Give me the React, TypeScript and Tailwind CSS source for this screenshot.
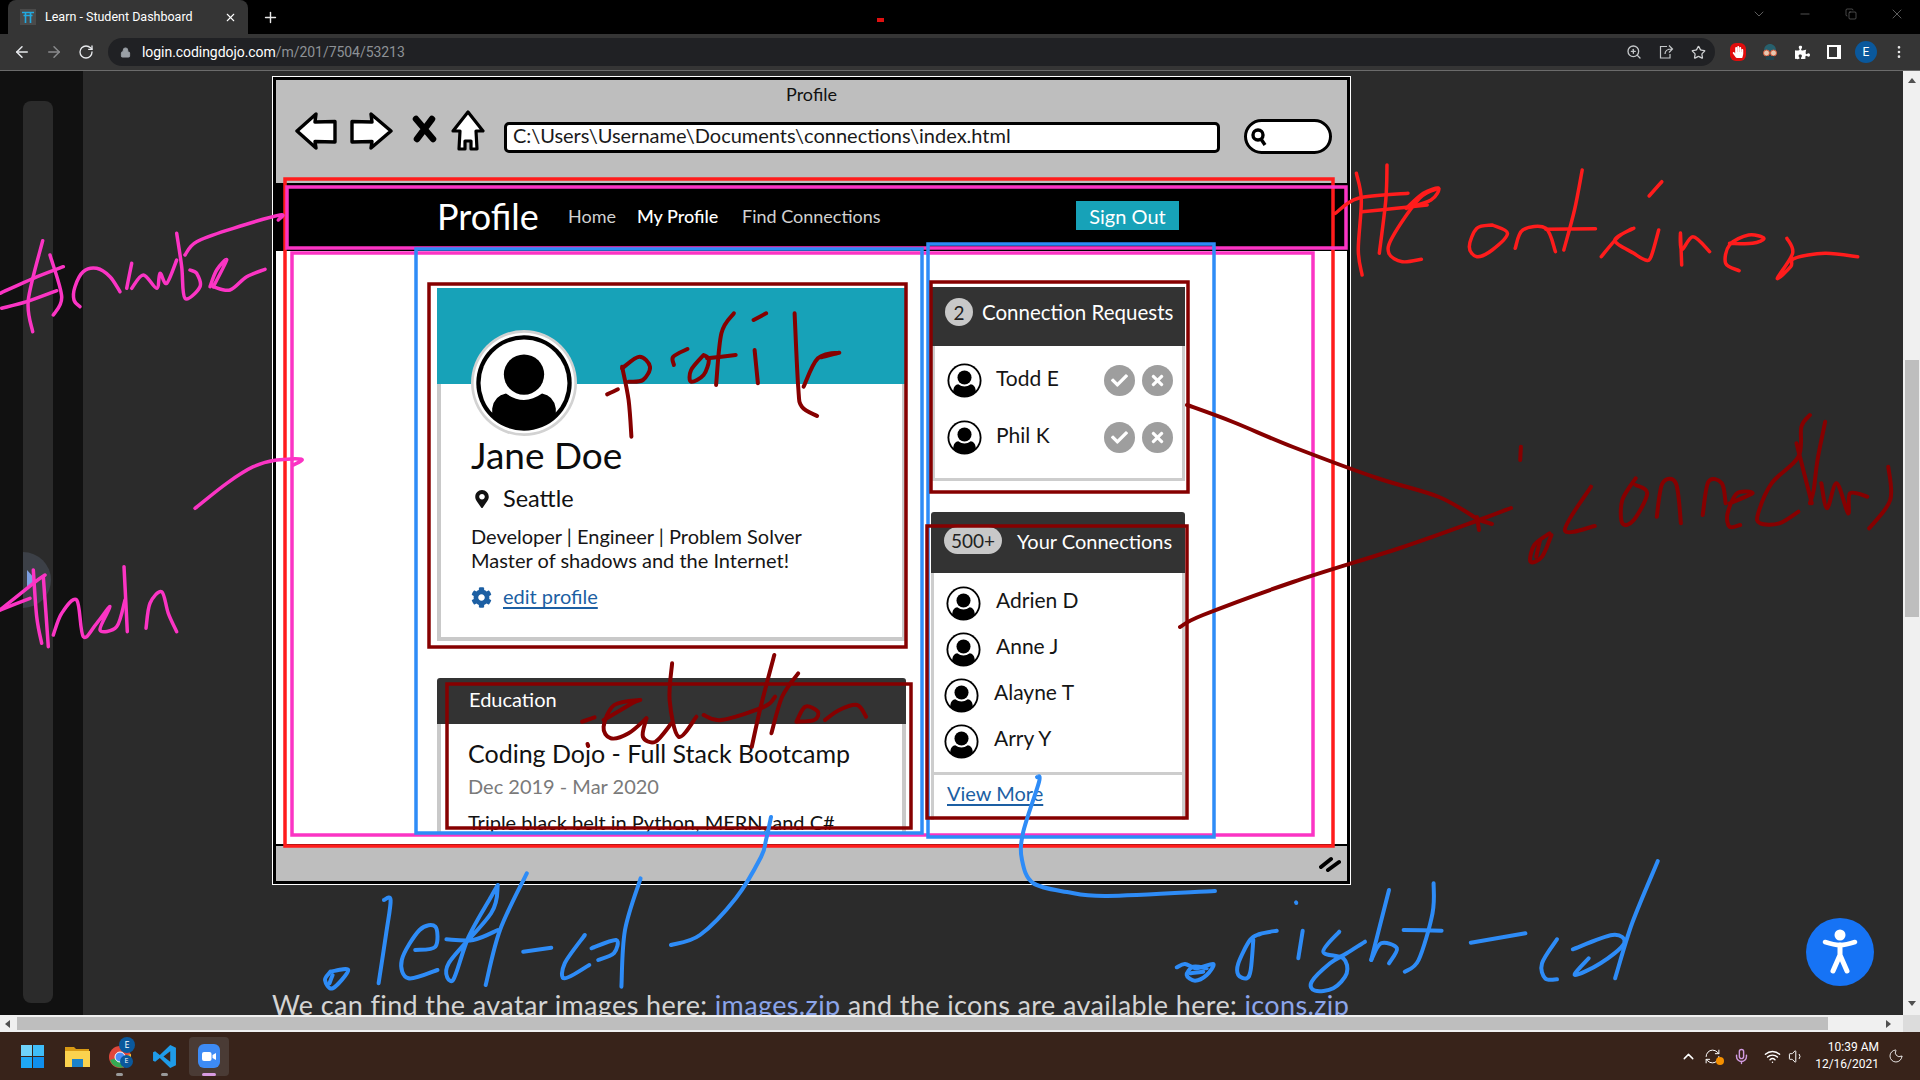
import React from "react";
import {
  ArrowLeft, ArrowRight, RotateCw, Lock, ZoomIn, Star, EllipsisVertical, Minus, X, Plus, ChevronDown, Copy,
  ChevronUp, Mic, Wifi, Volume1, Moon, RefreshCw,
} from "lucide-react";
import { FaCheck, FaTimes, FaCog, FaMapMarkerAlt, FaPuzzlePiece, FaHandPaper } from "react-icons/fa";

type Stroke = number[];
type Ink = { x: number; y: number; sx: number; sy: number; color: string; w: number; strokes: Stroke[] };

function toPath(s: Stroke, o: Ink) {
  const p: [number, number][] = [];
  for (let i = 0; i < s.length; i += 2) p.push([o.x + s[i] / o.sx, o.y + s[i + 1] / o.sy]);
  let d = `M${p[0][0].toFixed(1)} ${p[0][1].toFixed(1)}`;
  for (let i = 0; i < p.length - 1; i++) {
    const a = p[Math.max(i - 1, 0)], b = p[i], c = p[i + 1], e = p[Math.min(i + 2, p.length - 1)];
    d += `C${(b[0] + (c[0] - a[0]) / 6).toFixed(1)} ${(b[1] + (c[1] - a[1]) / 6).toFixed(1)} ${(c[0] - (e[0] - b[0]) / 6).toFixed(1)} ${(c[1] - (e[1] - b[1]) / 6).toFixed(1)} ${c[0].toFixed(1)} ${c[1].toFixed(1)}`;
  }
  return d;
}

const PINK = "#fb34c4", RED = "#ff1c1c", BLUE = "#2e8cf7", DARK = "#860000";

const inks: Ink[] = [
  { x: 0, y: 200, sx: 3, sy: 3, color: PINK, w: 3.5, strokes: [
    [0,280,100,235,190,200],[5,325,80,305,170,272],[128,122,85,300,98,395],[150,165,185,290,160,345],
    [240,320,222,300,225,260,250,215,290,205,330,230,360,275],[380,265,395,190],[395,265,430,225,470,265,480,220,500,250,530,180],
    [530,100,545,200,555,295,600,260,590,220,570,210],[555,165,590,125,700,85,840,45,835,60],
    [630,260,650,210,680,180,640,260],[640,260,690,270,740,230,795,208],
    [585,925,680,850,760,800,830,780,905,778,880,795],
    [0,1230,100,1150,135,1125],[0,1230,90,1195],[100,1110,110,1250,125,1330],[130,1130,145,1340],
    [160,1305,185,1240,230,1200,250,1310,290,1270,330,1220,300,1290,350,1280,375,1200],[372,1100,382,1295],
    [438,1285,450,1210,485,1175,505,1240,530,1295],
  ]},
  { x: 1320, y: 150, sx: 2.613, sy: 3, color: RED, w: 3.5, strokes: [
    [95,70,108,150,100,300,110,375],[175,45,172,150,155,310],[40,190,100,145,230,130],[110,185,200,175,280,165],
    [310,115,260,145,190,260,180,310,215,335,265,328],[225,175,270,130,310,115,290,150,225,175],
    [450,225,410,235,390,290,410,320,450,300,490,250,450,225],[510,295,530,240,590,235,615,305],
    [685,60,665,180,637,300],[590,238,720,236],[735,320,780,260,820,235,770,270,820,310,850,330,865,320,885,240],
    [860,138,893,95],[945,345,942,250,945,300,975,260,1018,305],
    [1070,280,1130,280,1160,265,1120,255,1070,285,1060,340,1095,362],[1220,265,1235,310,1195,385,1230,350,1240,325,1320,310,1405,320],
  ]},
  { x: 0, y: 0, sx: 1, sy: 1, color: DARK, w: 4, strokes: [
    [1187,405,1233,422,1293,447,1377,478,1439,497,1479,520],
    [1180,627,1203,615,1293,582,1400,548,1479,520,1511,508],
    [1479,520,1492,524],[1477,517,1479,530],
  ]},
  { x: 1320, y: 150, sx: 2.613, sy: 3, color: DARK, w: 4, strokes: [
    [525,890,523,930],[708,1010,640,1140,718,1128],[600,1150,560,1185,550,1235,580,1220,605,1155],[575,1170,565,1220],
    [825,985,790,1050,790,1120,820,1110,855,1030,825,1005],[880,1100,895,1000,930,1000,943,1120],
    [1000,1095,1015,995,1050,1000,1060,1060],[1070,1060,1130,1030,1090,1030,1065,1090,1070,1130,1098,1125],
    [1250,1085,1200,1120,1150,1120,1145,1090,1180,1000,1250,920,1258,830,1280,795],[1245,880,1285,1060],[1320,815,1300,930,1290,1020,1280,1060],
    [1310,1000,1325,1075,1350,1000,1380,1090,1385,1030,1430,1040],[1485,950,1490,1050,1435,1135],
  ]},
  { x: 400, y: 300, sx: 2.8, sy: 3, color: DARK, w: 4, strokes: [
    [580,283,610,268],[622,200,640,300,648,410],[622,205,670,170,700,200,680,240,640,245],[767,195,765,170,805,147],
    [850,165,815,210,815,245,850,225,865,180,850,165],[935,40,900,100,885,255],[860,175,940,165],[990,60,1025,40],
    [993,150,1002,250],[1105,40,1115,260,1125,320,1168,348],[1130,260,1170,175,1230,158,1180,172],
  ]},
  { x: 400, y: 640, sx: 2.8, sy: 3, color: DARK, w: 4, strokes: [
    [510,245,545,232],[525,312,527,318],[570,240,650,190,670,180,600,195,570,260,590,295,640,280,690,235],
    [690,235,680,290,715,305,760,250],[762,70,755,180,780,290,830,230],[850,225,900,240,1020,200,1050,170],
    [1048,45,1010,200,985,320],[1115,100,1070,170,1040,280],[1110,245,1135,200,1170,215,1160,240,1110,245],
    [1190,240,1230,210,1280,195,1305,230],
  ]},
  { x: 0, y: 880, sx: 2.24, sy: 3, color: BLUE, w: 4, strokes: [
    [740,275,780,270,745,325,728,300,740,275],[745,285,738,310],[860,60,875,60,865,160,848,310],
    [930,210,975,200,975,140,940,150,900,240,915,295,980,270],
    [1115,15,1100,50,1050,170,1015,300,1005,250,1100,100,1115,15],[1180,-20,1120,150,1088,315],[1000,178,1060,180,1115,150],
    [1172,215,1235,203],[1310,165,1265,250,1265,295,1320,255],[1340,240,1375,220,1380,180,1325,205],[1435,-5,1400,150,1392,320],
  ]},
  { x: 0, y: 0, sx: 1, sy: 1, color: BLUE, w: 4, strokes: [
    [771,817,766,840,761,857,736,898,700,935,671,945],
    [1037,777,1039,782,1023,833,1022,860,1033,883,1067,892,1107,896,1215,891],
  ]},
  { x: 1160, y: 860, sx: 3, sy: 3, color: BLUE, w: 4, strokes: [
    [50,322,75,312,110,325,160,312,140,345,105,362,80,345,100,320,140,325],[90,340,130,335],
    [350,212,300,222,270,240,235,310,235,345,260,355,272,330,280,240],
    [408,127,409,129],[428,212,415,295],
    [538,215,490,275,550,295,560,340,520,385,465,392,455,365,510,310,560,280,615,245],
  ]},
  { x: 1300, y: 880, sx: 2.529, sy: 3, color: BLUE, w: 4, strokes: [
    [225,30,180,240],[180,240,205,190,245,205,225,250],[338,10,335,100,300,240,265,275],[262,150,358,152],
    [432,188,570,160],[650,178,612,250,620,295,650,298],[690,208,790,165,820,190,760,250,695,285,730,235],
    [905,-57,840,130,797,295],
  ]},
];

const boxes: [number, number, number, number, string][] = [
  [285, 179, 1333, 846, RED],
  [287, 187, 1346, 248, PINK],
  [292, 253, 1313, 835, PINK],
  [416, 249, 922, 833, BLUE],
  [928, 244, 1214, 837, BLUE],
  [429, 284, 906, 647, DARK],
  [931, 282, 1188, 492, DARK],
  [927, 526, 1187, 818, DARK],
  [447, 684, 911, 828, DARK],
];

function Annotations() {
  return (
    <svg className="absolute inset-0 pointer-events-none" width={1920} height={1080} viewBox="0 0 1920 1080" fill="none">
      {boxes.map(([a, b, c, d, col], i) => (
        <rect key={i} x={a} y={b} width={c - a} height={d - b} stroke={col} strokeWidth={3.5} />
      ))}
      {inks.map((ink, i) => (
        <g key={i} stroke={ink.color} strokeWidth={ink.w} strokeLinecap="round" strokeLinejoin="round">
          {ink.strokes.map((s, j) => <path key={j} d={toPath(s, ink)} />)}
        </g>
      ))}
    </svg>
  );
}

function Avatar({ size, ring = false }: { size: number; ring?: boolean }) {
  return (
    <svg width={size} height={size} viewBox="0 0 100 100" className="shrink-0">
      <defs>
        <clipPath id={ring ? "av1" : "av2"}><circle cx="50" cy="50" r="43" /></clipPath>
      </defs>
      <circle cx="50" cy="50" r="50" fill={ring ? "#d2d2d2" : "#fff"} />
      <circle cx="50" cy="50" r={ring ? 47.5 : 49} fill="#fff" />
      <circle cx="50" cy="50" r={ring ? 45 : 46} fill="#000" />
      <circle cx="50" cy="50" r="41" fill="#fff" />
      <g clipPath={`url(#${ring ? "av1" : "av2"})`}>
        <circle cx="50" cy="42" r="19" fill="#000" />
        <path d="M20 100 L20 74 Q22 62 33 60 Q50 72 67 60 Q78 62 80 74 L80 100 Z" fill="#000" />
        <path d="M8 100 H92 V78 H8Z" fill="#000" />
      </g>
    </svg>
  );
}

function Mini({ n, c }: { n: string; c: string }) {
  return (
    <div className={`flex items-center gap-[14px] ${c}`}>
      <Avatar size={37} />
      <span className="text-[21px] leading-none text-[#151515] -mt-[8px]">{n}</span>
    </div>
  );
}

function RoundBtn({ kind }: { kind: "ok" | "no" }) {
  return (
    <span className="w-[31px] h-[31px] rounded-full bg-[#9e9e9e] flex items-center justify-center">
      {kind === "ok" ? <FaCheck size={17} color="#fff" /> : <FaTimes size={17} color="#fff" />}
    </span>
  );
}

function ChromeBars() {
  return (
    <>
      <div className="h-[34px] bg-black flex items-end pl-[8px] relative shrink-0 font-['Roboto',sans-serif]">
        <div className="w-[240px] h-[34px] bg-[#353535] rounded-t-[8px] flex items-center pl-[12px] pr-[11px] text-white">
          <span className="w-[16px] h-[16px] bg-[#4a4a4a] flex items-center justify-center">
            <svg width="12" height="12" viewBox="0 0 12 12" stroke="#22a9e0" strokeWidth="1.6" fill="none"><path d="M0 1.5H12M1.5 4.5H10.5M3.5 1.5V12M8.5 1.5V12" /></svg>
          </span>
          <span className="ml-[9px] text-[12.5px] flex-1 whitespace-nowrap">Learn - Student Dashboard</span>
          <X size={13} color="#fff" />
        </div>
        <span className="ml-[14px] self-center"><Plus size={17} color="#e8e8e8" /></span>
        <span className="absolute left-[877px] top-[18px] w-[7px] h-[4px] bg-[#e01010]" />
        <div className="absolute top-0 right-0 h-[28px] flex items-center text-[#8c8c8c]">
          <span className="w-[46px] flex justify-center"><ChevronDown size={16} strokeWidth={1} /></span>
          <span className="w-[46px] flex justify-center"><Minus size={14} strokeWidth={1} /></span>
          <span className="w-[46px] flex justify-center"><Copy size={12} strokeWidth={1} /></span>
          <span className="w-[46px] flex justify-center"><X size={16} strokeWidth={1} /></span>
        </div>
      </div>
      <div className="h-[37px] bg-[#353535] border-b border-[#6b6b6b] flex items-center shrink-0 font-['Roboto',sans-serif]">
        <span className="w-[32px] ml-[6px] flex justify-center"><ArrowLeft size={18} color="#e8eaed" /></span>
        <span className="w-[32px] flex justify-center"><ArrowRight size={18} color="#8a8b8d" /></span>
        <span className="w-[32px] flex justify-center"><RotateCw size={16} color="#e8eaed" /></span>
        <div className="ml-[6px] w-[1607px] h-[28px] rounded-full bg-[#202124] flex items-center pl-[12px]">
          <Lock size={11} color="#9aa0a6" fill="#9aa0a6" />
          <span className="ml-[11px] text-[14px] text-white tracking-[-0.05px]">login.codingdojo.com<span className="text-[#8d9196]">/m/201/7504/53213</span></span>
          <span className="flex-1" />
          <span className="w-[32px] flex justify-center"><ZoomIn size={16} color="#c4c7c9" /></span>
          <span className="w-[32px] flex justify-center">
            <svg width="16" height="16" viewBox="0 0 16 16" fill="none" stroke="#c4c7c9" strokeWidth="1.2"><path d="M9 2.5H2.5V14H12V10M7 10C7 6.5 9.5 5 14 5M11 1.5L14.5 5L11 8.5" /></svg>
          </span>
          <span className="w-[32px] mr-[1px] flex justify-center"><Star size={15} color="#d0d2d4" strokeWidth={2} /></span>
        </div>
        <div className="w-[32px] ml-[7px] flex justify-center">
          <span className="w-[16px] h-[18px] rounded-[6px] bg-[#e00d0d] flex items-center justify-center"><FaHandPaper size={12} color="#fff" /></span>
        </div>
        <span className="w-[32px] flex justify-center">
          <svg width="18" height="18" viewBox="0 0 18 18"><path d="M3 8C3 3 6 1 9 1S15 3 15 8Z" fill="#27606d" /><circle cx="5.5" cy="10" r="3" fill="#e7c8b0" stroke="#d55b3d" /><circle cx="12.5" cy="10" r="3" fill="#e7c8b0" stroke="#d55b3d" /><path d="M5 13H13V17H5Z" fill="#22434e" /></svg>
        </span>
        <span className="w-[32px] flex justify-center"><FaPuzzlePiece size={15} color="#fff" /></span>
        <span className="w-[32px] flex justify-center">
          <span className="w-[14px] h-[14px] bg-white flex justify-start"><span className="w-[8px] h-[10px] mt-[2px] ml-[2px] bg-[#353535]" /></span>
        </span>
        <span className="w-[32px] flex justify-center">
          <span className="w-[22px] h-[22px] rounded-full bg-[#0a589c] text-white text-[12px] flex items-center justify-center">E</span>
        </span>
        <span className="w-[34px] flex justify-center"><EllipsisVertical size={16} color="#e8e8e8" /></span>
      </div>
    </>
  );
}

function Sidebar() {
  return (
    <div className="w-[83px] bg-[#111111] shrink-0 pl-[23px] pt-[30px] relative">
      <div className="w-[30px] h-[902px] bg-[#2b2b2b] rounded-[8px]" />
      <div className="absolute left-[23px] top-[481px] w-[28px] h-[56px] rounded-r-full bg-[#3c4047] flex items-center pl-[4px]">
        <span className="w-0 h-0 border-y-[10px] border-y-transparent border-l-[9px] border-l-[#7d9fe3]" />
      </div>
    </div>
  );
}

function MockBar() {
  return (
    <div className="h-[103px] bg-[#bebebe] flex flex-col shrink-0">
      <div className="h-[30px] pt-[3px] text-center text-[18px] leading-[22px] text-[#111]">Profile</div>
      <div className="flex items-start pl-[19px] h-[73px]">
        <svg width="42" height="38" viewBox="0 0 42 38" className="mt-[2px]" fill="#fff" stroke="#000" strokeWidth="3.4" strokeLinejoin="round">
          <path d="M2 19 L21 2 L20 10 L40 9.5 L40 30 L20 29.5 L21 36 Z" />
        </svg>
        <svg width="43" height="38" viewBox="0 0 43 38" className="ml-[13px] mt-[2px]" fill="#fff" stroke="#000" strokeWidth="3.4" strokeLinejoin="round">
          <path d="M41 19 L21 2 L22 10 L2 9.5 L2 30 L22 29.5 L21 36 Z" />
        </svg>
        <svg width="25" height="28" viewBox="0 0 25 28" className="ml-[19px] mt-[5px]" stroke="#000" strokeWidth="6.5" strokeLinecap="round" fill="none">
          <path d="M4 4 L21 24 M20 4 L5 24" />
        </svg>
        <svg width="34" height="41" viewBox="0 0 34 41" className="ml-[14px]" fill="#fff" stroke="#000" strokeWidth="3.2" strokeLinejoin="round">
          <path d="M17 2 L32 21 L25 21 L26 39 L20 39 L20 31 L14 31 L14 39 L8 39 L9 21 L2 21 Z" />
        </svg>
        <div className="ml-[19px] mt-[12px] w-[716px] h-[31px] bg-white border-[3px] border-black rounded-[5px] flex items-center pl-[6px] text-[20px] text-[#1a1a1a] leading-none pb-[5px] whitespace-nowrap">C:\Users\Username\Documents\connections\index.html</div>
        <div className="ml-[24px] mt-[9px] w-[88px] h-[35px] bg-white border-[3px] border-black rounded-full flex items-center pl-[3px]">
          <svg width="18" height="20" viewBox="0 0 18 20" fill="none" stroke="#000" strokeWidth="3.4"><circle cx="8" cy="8" r="5" /><path d="M11 12 L15 18" /></svg>
        </div>
      </div>
    </div>
  );
}

function MockNav() {
  return (
    <div className="h-[68px] bg-black flex items-center pl-[161px] shrink-0">
      <span className="text-[36px] text-white leading-none w-[131px] -mt-[2px]">Profile</span>
      <span className="text-[18px] text-[#d2d2d2] w-[69px] -mt-[1px]">Home</span>
      <span className="text-[18px] font-medium text-white w-[105px] -mt-[1px]">My Profile</span>
      <span className="text-[18px] text-[#d2d2d2] w-[334px] -mt-[1px]">Find Connections</span>
      <span className="w-[103px] h-[29px] bg-[#17a2b8] text-white text-[20px] flex items-center justify-center leading-none -mt-[3px]">Sign Out</span>
    </div>
  );
}

function ProfileCard() {
  return (
    <div className="shrink-0">
      <div className="h-[96px] bg-[#17a2b8]" />
      <div className="h-[257px] border-x-[4px] border-b-[4px] border-[#c9c9c9] pl-[30px] bg-white flex flex-col">
        <div className="-mt-[54px] h-[106px] shrink-0"><Avatar size={106} ring /></div>
        <div className="text-[37px] leading-[38px] text-[#0c0c0c] whitespace-nowrap">Jane Doe</div>
        <div className="flex items-center mt-[10px] h-[30px]">
          <span className="w-[32px] pl-[2px]"><FaMapMarkerAlt size={18} color="#111" /></span>
          <span className="text-[23.5px] text-[#111]">Seattle</span>
        </div>
        <div className="mt-[10px] text-[20px] leading-[24px] text-[#151515] whitespace-nowrap">
          <div>Developer | Engineer | Problem Solver</div>
          <div>Master of shadows and the Internet!</div>
        </div>
        <div className="flex items-center mt-[11px] h-[28px]">
          <span className="w-[32px]"><FaCog size={21} color="#1c5fa3" /></span>
          <span className="text-[20px] text-[#1c5fa3] underline underline-offset-[3px] -mt-[2px]">edit profile</span>
        </div>
      </div>
    </div>
  );
}

function EducationCard() {
  return (
    <div className="mt-[37px]">
      <div className="h-[46px] bg-[#333333] rounded-t-[3px] pl-[32px] pb-[4px] flex items-center text-white text-[20px] leading-none">Education</div>
      <div className="border-x-[4px] border-[#c9c9c9] h-[120px] pl-[27px] flex flex-col">
        <div className="mt-[13px] text-[25px] leading-[32px] text-[#111] whitespace-nowrap">Coding Dojo - Full Stack Bootcamp</div>
        <div className="mt-[4px] text-[20px] leading-[26px] text-[#7a7a7a]">Dec 2019 - Mar 2020</div>
        <div className="mt-[10px] text-[20px] leading-[26px] text-[#111] whitespace-nowrap">Triple black belt in Python, MERN, and C#</div>
      </div>
    </div>
  );
}

function RequestsCard() {
  const rows = ["Todd E", "Phil K"];
  return (
    <div className="ml-[1px] w-[253px] shrink-0">
      <div className="h-[59px] bg-[#333333] flex items-center pl-[13px] pb-[9px]">
        <span className="w-[28px] h-[28px] rounded-full bg-[#c8c8c8] text-[#222] text-[19px] flex items-center justify-center leading-none">2</span>
        <span className="ml-[9px] text-[20.5px] text-white whitespace-nowrap leading-none">Connection Requests</span>
      </div>
      <div className="h-[135px] border-x-[3px] border-b-[3px] border-[#cdcdcd] pt-[15px] pl-[11px]">
        {rows.map((n, i) => (
          <div key={n} className={`flex items-center h-[39px] ${i ? "mt-[18px]" : ""}`}>
            <Avatar size={37} />
            <span className="ml-[13px] text-[21px] leading-none text-[#151515] w-[108px] -mt-[7px]">{n}</span>
            <span className="flex gap-[7px]"><RoundBtn kind="ok" /><RoundBtn kind="no" /></span>
          </div>
        ))}
      </div>
    </div>
  );
}

function ConnectionsCard() {
  return (
    <div className="mt-[31px] w-[254px]">
      <div className="h-[61px] bg-[#333333] rounded-t-[3px] flex items-center pl-[13px] pb-[4px]">
        <span className="w-[58px] h-[27px] rounded-full bg-[#c8c8c8] text-[#222] text-[19px] flex items-center justify-center leading-none">500+</span>
        <span className="ml-[15px] text-[20px] text-white whitespace-nowrap leading-none">Your Connections</span>
      </div>
      <div className="border-x-[3px] border-[#cdcdcd] pt-[11px] pl-[10px] h-[199px] flex flex-col">
        <Mini n="Adrien D" c="h-[39px] ml-[1px]" />
        <Mini n="Anne J" c="h-[39px] mt-[7px] ml-[1px]" />
        <Mini n="Alayne T" c="h-[39px] mt-[7px] -ml-[1px]" />
        <Mini n="Arry Y" c="h-[39px] mt-[7px] -ml-[1px]" />
      </div>
      <div className="border-x-[3px] border-t-[3px] border-[#cdcdcd] h-[48px] pl-[13px] pt-[5px] text-[20px] text-[#1c5fa3] underline underline-offset-[3px] leading-[26px]">View More</div>
    </div>
  );
}

function Mock() {
  return (
    <div className="w-[1079px] h-[809px] border border-white ml-[189px] shrink-0">
      <div className="h-full border-[3px] border-black flex flex-col font-['Lato',sans-serif]">
        <MockBar />
        <MockNav />
        <div className="h-[593px] bg-white flex pl-[161px] pt-[37px] overflow-hidden shrink-0">
          <div className="w-[469px] h-[545px] overflow-hidden shrink-0"><ProfileCard /><EducationCard /></div>
          <div className="ml-[25px] -mt-[1px] w-[256px]"><RequestsCard /><ConnectionsCard /></div>
        </div>
        <div className="flex-1 bg-[#bebebe] border-t-[2px] border-black flex items-center justify-end pr-[6px]">
          <svg width="22" height="16" viewBox="0 0 22 16" stroke="#000" strokeWidth="4" strokeLinecap="round"><path d="M2 11 L12 3 M9 14 L20 6" /></svg>
        </div>
      </div>
    </div>
  );
}

function Main() {
  return (
    <div className="flex-1 relative overflow-hidden pt-[5px]">
      <Mock />
      <p className="ml-[189px] mt-[102px] whitespace-nowrap text-[27px] tracking-[0.37px] leading-[36px] text-[#d4d4d4] font-['Lato',sans-serif]">
        We can find the avatar images here: <span className="text-[#8ca5ea]">images.zip</span> and the icons are available here: <span className="text-[#8ca5ea]">icons.zip</span>
      </p>
      <div className="absolute left-[1723px] top-[847px] w-[68px] h-[68px] rounded-full bg-[#1673f5] flex items-center justify-center">
        <svg width="44" height="48" viewBox="0 0 44 48" fill="none" stroke="#fff" strokeLinecap="round" strokeLinejoin="round">
          <circle cx="22" cy="7" r="5.5" fill="#fff" stroke="none" />
          <path d="M7 14 Q16 17 22 17 Q28 17 37 14" strokeWidth="4.6" />
          <path d="M22 17 V27 M22 27 L15 43 M22 27 L29 43" strokeWidth="5" />
        </svg>
      </div>
    </div>
  );
}

function VScroll() {
  return (
    <div className="w-[17px] bg-[#f0f0f0] shrink-0 flex flex-col items-center">
      <span className="mt-[7px] w-0 h-0 border-x-[4px] border-x-transparent border-b-[5px] border-b-[#505050]" />
      <div className="mt-[277px] w-[14px] h-[257px] bg-[#bebebe]" />
      <span className="mt-[384px] w-0 h-0 border-x-[4px] border-x-transparent border-t-[5px] border-t-[#505050]" />
    </div>
  );
}

function HScroll() {
  return (
    <div className="h-[17px] bg-[#f0f0f0] flex items-center shrink-0">
      <span className="ml-[5px] w-0 h-0 border-y-[4px] border-y-transparent border-r-[5px] border-r-[#505050]" />
      <div className="ml-[7px] w-[1811px] h-[13px] bg-[#bebebe]" />
      <span className="ml-[58px] w-0 h-0 border-y-[4px] border-y-transparent border-l-[5px] border-l-[#505050]" />
      <span className="flex-1" />
      <span className="w-[17px] h-full bg-[#dcdcdc]" />
    </div>
  );
}

function Taskbar() {
  return (
    <div className="h-[48px] bg-[#38231a] flex items-center shrink-0 relative font-['Open_Sans',sans-serif]">
      <div className="ml-[21px] w-[23px] h-[23px] grid grid-cols-2 gap-[1px]">
        <span className="bg-[#6fd3fb]" /><span className="bg-[#3fbdf9]" /><span className="bg-[#1fa8f5]" /><span className="bg-[#0f8fee]" />
      </div>
      <svg width="25" height="22" viewBox="0 0 25 22" className="ml-[21px]">
        <path d="M0 2 H9 L11 4 H24 V8 H0Z" fill="#d99a14" /><path d="M0 6 H25 V22 H0Z" fill="#fbd24e" /><rect x="7" y="14" width="11" height="8" fill="#1b82c9" />
      </svg>
      <div className="ml-[19px] relative w-[26px] h-[26px]">
        <svg width="22" height="22" viewBox="0 0 22 22" className="absolute left-0 top-[3px]">
          <circle cx="11" cy="11" r="11" fill="#e0473c" /><path d="M11 11 L1 14 A11 11 0 0 0 14 21.5 Z" fill="#36a853" /><path d="M11 11 L22 8 A11 11 0 0 1 14 21.5Z" fill="#fbc02d" /><circle cx="11" cy="11" r="5" fill="#4c8df6" stroke="#fff" />
        </svg>
        <span className="absolute left-[10px] -top-[6px] w-[16px] h-[16px] rounded-full bg-[#0a589c] text-white text-[9px] flex items-center justify-center">E</span>
        <span className="absolute left-[11px] top-[12px] w-[13px] h-[13px] rounded-full bg-[#0a589c] text-white text-[7px] flex items-center justify-center">E</span>
      </div>
      <svg width="25" height="25" viewBox="0 0 24 24" className="ml-[17px]" fill="#1f9be8">
        <path fillRule="evenodd" d="M17.5 1 L7.5 10.5 L3 7 L1 8 V16 L3 17 L7.5 13.5 L17.5 23 L23 20.5 V3.5 Z M17.5 7 V17 L11 12 Z" />
      </svg>
      <div className="ml-[12px] w-[40px] h-[39px] rounded-[4px] bg-[#4a3b35] flex items-center justify-center">
        <span className="w-[22px] h-[24px] rounded-[6px] bg-[#3d8bf5] flex items-center justify-center">
          <svg width="14" height="9" viewBox="0 0 14 9" fill="#fff"><rect width="9.5" height="9" rx="2" /><path d="M10.5 3 L14 1 V8 L10.5 6Z" /></svg>
        </span>
      </div>
      <span className="absolute left-[116px] top-[41px] w-[7px] h-[3px] rounded bg-[#9a9a9a]" />
      <span className="absolute left-[161px] top-[41px] w-[7px] h-[3px] rounded bg-[#9a9a9a]" />
      <span className="absolute left-[202px] top-[41px] w-[14px] h-[3px] rounded bg-[#d79be0]" />

      <span className="flex-1" />
      <div className="flex items-center text-white">
        <span className="w-[24px] flex justify-center"><ChevronUp size={17} /></span>
        <span className="w-[24px] flex justify-center relative">
          <RefreshCw size={17} strokeWidth={1.4} />
          <span className="absolute right-0 bottom-0 w-[8px] h-[8px] rounded-full bg-[#f59000]" />
        </span>
        <span className="ml-[3px] w-[28px] flex justify-center"><Mic size={17} color="#d29be0" /></span>
        <span className="ml-[3px] w-[28px] flex justify-center"><Wifi size={17} /></span>
        <span className="w-[20px] flex justify-center"><Volume1 size={17} strokeWidth={1.4} /></span>
        <div className="ml-[3px] w-[70px] text-right text-[12px] leading-[17px] font-['Roboto',sans-serif]">
          <div>10:39 AM</div>
          <div>12/16/2021</div>
        </div>
        <span className="ml-[5px] w-[36px] pl-[4px]"><Moon size={16} strokeWidth={1.3} /></span>
      </div>
    </div>
  );
}

export default function App() {
  return (
    <div className="w-[1920px] h-[1080px] relative overflow-hidden flex flex-col bg-[#2b2b2b]">
      <ChromeBars />
      <div className="h-[944px] flex shrink-0">
        <Sidebar />
        <Main />
        <VScroll />
      </div>
      <HScroll />
      <Taskbar />
      <Annotations />
    </div>
  );
}
